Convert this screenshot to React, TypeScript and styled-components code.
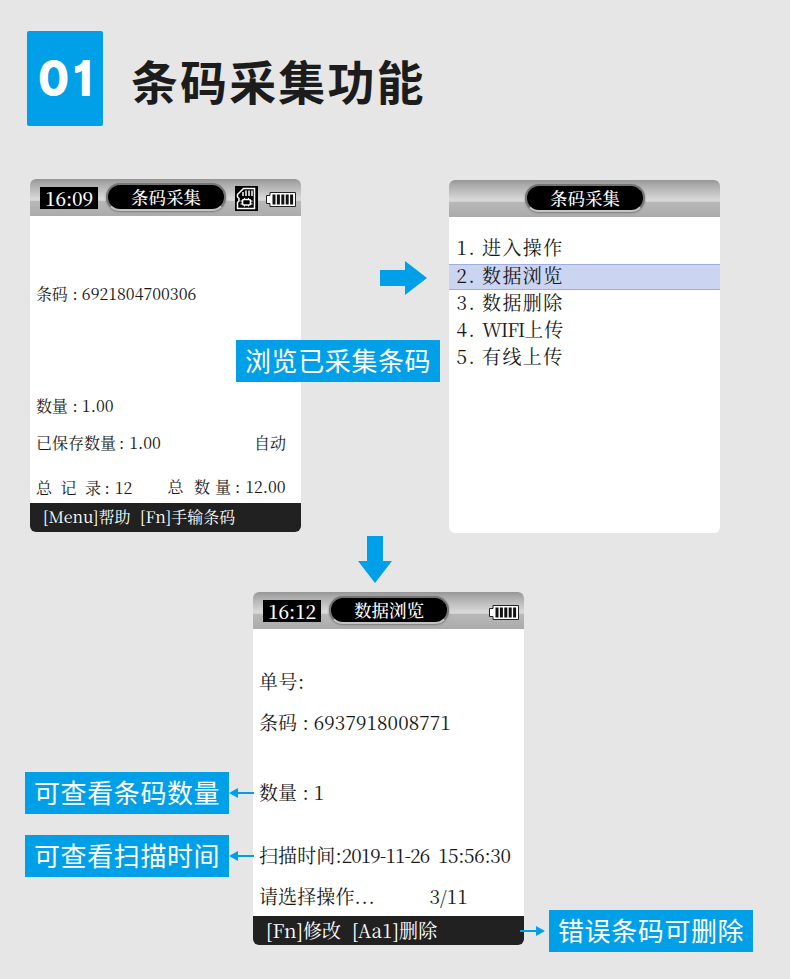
import styled, { createGlobalStyle } from 'styled-components';


const GlobalStyle = createGlobalStyle`
    * {
        box-sizing: border-box;
    }

    body {
        margin: 0;
        background-color: #E6E6E6;
    }
`;

const Page = styled.main`
    width: 790px;
    height: 979px;
    padding-top: 31px;

    display: flex;
    flex-direction: column;

    overflow: hidden;

    background-color: #E6E6E6;
    font-family: 'Noto Sans CJK SC', sans-serif;
`;

const Header = styled.header`
    height: 95px;
    padding-left: 27px;

    display: flex;
    flex-direction: row;
    align-items: center;
`;

const NumberBadge = styled.div`
    width: 76px;
    height: 95px;

    display: flex;
    align-items: center;
    justify-content: center;

    border-radius: 2px;

    background-color: #00A0E9;
`;

const BadgeText = styled.span`
    padding-left: 4px;

    font-family: 'Inter', sans-serif;
    font-size: 50px;
    font-weight: 800;
    font-feature-settings: 'cv01';
    line-height: 95px;
    letter-spacing: 4px;
    color: white;

    transform: scaleX(0.9);
`;

const Title = styled.h1`
    margin: 3px 0 0 28px;

    font-size: 47px;
    line-height: 60px;
    font-weight: 700;
    letter-spacing: 2.1px;
    color: #1C1C1C;
`;

const TopRow = styled.section`
    height: 354px;
    margin-top: 53px;
    padding-left: 30px;

    display: flex;
    flex-direction: row;
    align-items: flex-start;
`;

const MiddleColumn = styled.div`
    width: 148px;
    padding-top: 82px;

    display: flex;
    flex-direction: column;
    gap: 45px;

    z-index: 1;
`;

const RightArrow = styled.svg`
    width: 47px;
    height: 34px;
    margin-left: 79px;

    display: block;
`;

const DownArrow = styled.svg`
    width: 34px;
    height: 47px;
    margin: 3px 0 9px 358px;

    display: block;
    flex-shrink: 0;
`;

const Callout = styled.div<{ $offset?: number }>`
    width: 204px;
    height: 42px;
    margin-left: ${({ $offset }) => $offset ?? 0}px;
    padding-left: 9px;

    flex-shrink: 0;

    font-size: 26px;
    line-height: 40px;
    letter-spacing: 0.6px;
    white-space: nowrap;
    color: white;
    background-color: #00A0E9;
`;

const Screen = styled.article<{ $drop?: number }>`
    width: 271px;
    height: 353px;
    margin-top: ${({ $drop }) => $drop ?? 0}px;

    display: flex;
    flex-direction: column;
    flex-shrink: 0;

    border-radius: 6px;
    overflow: hidden;

    background-color: white;
    font-family: 'Noto Serif CJK SC', 'Liberation Serif', 'Noto Sans CJK SC', serif;
    color: #181818;
`;

const StatusBar = styled.div`
    height: 37px;
    padding: 0 5px 0 10px;

    display: grid;
    grid-template-columns: 58px 8px 120px 9px 23px 8px 30px;
    align-items: start;

    background: linear-gradient(#969696 0%, #A9A9A9 12%, #D9D9D9 54%, #D2D2D2 58%, #B8B8B8 60%, #ABABAB 100%);
`;

const Clock = styled.div`
    height: 22px;
    margin-top: 8px;

    grid-column: 1;

    text-align: center;
    font-size: 19px;
    font-weight: 500;
    line-height: 21px;
    letter-spacing: -0.2px;
    color: white;
    background-color: black;
`;

const Pill = styled.div`
    height: 28px;
    margin-top: 4px;

    grid-column: 3;

    border: 2px solid #757575;
    border-bottom-color: #C4C4C4;
    border-radius: 14px;
    box-shadow: 0 1px 2px #7C7C7C;

    text-align: center;
    font-size: 17.5px;
    font-weight: 500;
    line-height: 23px;
    color: white;
    background-color: black;
`;

const CardIcon = styled.svg`
    width: 23px;
    height: 25px;
    margin-top: 7px;

    grid-column: 5;
`;

const BatteryIcon = styled.svg`
    width: 30px;
    height: 15px;
    margin-top: 13px;

    grid-column: 7;
`;

const Body = styled.div`
    flex: 1;
`;

const Line = styled.div<{ $gap: number }>`
    height: 24px;
    margin-top: ${({ $gap }) => $gap}px;
    padding-left: 6px;

    display: flex;
    flex-direction: row;
    align-items: center;

    white-space: pre;
`;

const Run = styled.span<{ $size: number; $track?: number; $before?: number; $lift?: number }>`
    margin-left: ${({ $before }) => $before ?? 0}px;
    padding-bottom: ${({ $lift }) => $lift ?? 0}px;

    font-size: ${({ $size }) => $size}px;
    line-height: 24px;
    letter-spacing: ${({ $track }) => $track ?? 0}px;
`;

const Footer = styled.div`
    height: 29px;
    padding: 0 0 1px 13px;

    display: flex;
    flex-direction: row;
    align-items: center;

    white-space: pre;
    color: white;
    background-color: #212121;
`;

const MenuList = styled.ol`
    margin: 0;
    padding: 17px 0 0;

    list-style: none;
`;

const MenuItem = styled.li<{ $active?: boolean }>`
    height: ${({ $active }) => ($active ? 26 : 27)}px;
    margin-top: ${({ $active }) => ($active ? 3 : 0)}px;
    margin-bottom: ${({ $active }) => ($active ? -1 : 0)}px;
    padding: ${({ $active }) => ($active ? '0 0 4px 7.5px' : '0 0 2px 7.5px')};

    display: flex;
    flex-direction: row;
    align-items: center;

    border: 0 solid #9FAEDD;
    border-width: ${({ $active }) => ($active ? '1px 0' : '0')};

    background-color: ${({ $active }) => ($active ? '#CBD4F1' : 'transparent')};
`;

const MenuNumber = styled.span`
    width: 25.5px;

    font-size: 19px;
    line-height: 22px;
    letter-spacing: 1.6px;
`;

const BottomRow = styled.section`
    height: 387px;

    display: flex;
    flex-direction: row;
    align-items: flex-start;
`;

const LeftNotes = styled.div`
    width: 253px;
    padding: 180px 0 0 25px;

    display: flex;
    flex-direction: column;
    gap: 21px;

    z-index: 1;
`;

const RightNotes = styled.div`
    padding-top: 318px;

    z-index: 1;
`;

const Note = styled.div<{ $shift?: number }>`
    margin-left: ${({ $shift }) => $shift ?? 0}px;

    display: flex;
    flex-direction: row;
    align-items: center;
`;

const Pointer = styled.svg`
    width: 25px;
    height: 12px;

    display: block;
    flex-shrink: 0;
`;

const Battery = () => (
    <BatteryIcon viewBox="0 0 30 15">
        <path d="M4 .5h25.500v14H4v-3H.5v-8H4z" fill="#fff" stroke="#222" />
        <path d="M8 2.500v10M12.400 2.500v10M16.800 2.500v10M21.200 2.500v10M25.600 2.500v10" stroke="#111" strokeWidth="3" />
    </BatteryIcon>
);

const MemoryCard = () => (
    <CardIcon viewBox="0 0 23 25">
        <rect width="23" height="25" />
        <path d="M8.500 2.500h11v20h-17v-6l1.500-1.500v-2.500l-1.500-1.500v-2.500z" fill="none" stroke="#fff" strokeWidth="1.500" />
        <path d="M8 6v4M11 4.500v5.500M14 4.500v5.500M17 4.500v5.500" stroke="#fff" strokeWidth="1.500" />
        <rect x="7.500" y="13.500" width="8" height="5.500" rx="1.500" fill="none" stroke="#fff" strokeWidth="1.600" />
        <path d="M9.500 12v1.500M13.500 12v1.500M9.500 19v1.500M13.500 19v1.500M5.500 15h2M5.500 18h2M15.500 15h2M15.500 18h2" stroke="#fff" />
    </CardIcon>
);

const LeftPointer = () => (
    <Pointer viewBox="0 0 25 12">
        <path d="M0 6L9 1v4h16v2H9v4z" fill="#00A0E9" />
    </Pointer>
);

const RightPointer = () => (
    <Pointer viewBox="0 0 25 12">
        <path d="M25 6l-9-5v4H0v2h16v4z" fill="#00A0E9" />
    </Pointer>
);

const CollectScreen = () => (
    <Screen>
        <StatusBar>
            <Clock>16:09</Clock>
            <Pill>条码采集</Pill>
            <MemoryCard />
            <Battery />
        </StatusBar>
        <Body>
            <Line $gap={66}>
                <Run $size={16} $track={-0.2}>条码</Run>
                <Run $size={16} $before={5}>:</Run>
                <Run $size={16} $before={4}>6921804700306</Run>
            </Line>
            <Line $gap={88}>
                <Run $size={16} $track={-0.2}>数量</Run>
                <Run $size={16} $before={5}>:</Run>
                <Run $size={16} $before={4}>1.00</Run>
            </Line>
            <Line $gap={13}>
                <Run $size={16}>已保存数量</Run>
                <Run $size={16} $before={3}>:</Run>
                <Run $size={16} $before={5}>1.00</Run>
                <Run $size={16} $before={93}>自动</Run>
            </Line>
            <Line $gap={21}>
                <Run $size={16}>总</Run>
                <Run $size={16} $before={8.5}>记</Run>
                <Run $size={16} $before={8.5}>录</Run>
                <Run $size={16} $before={3.5}>:</Run>
                <Run $size={16} $before={5}>12</Run>
                <Run $size={16} $before={35} $lift={3}>总</Run>
                <Run $size={16} $before={10.5} $lift={3}>数</Run>
                <Run $size={16} $before={5} $lift={3}>量</Run>
                <Run $size={16} $before={4} $lift={3}>:</Run>
                <Run $size={16} $before={5} $lift={3}>12.00</Run>
            </Line>
        </Body>
        <Footer>
            <Run $size={16}>[Menu]</Run>
            <Run $size={16}>帮助</Run>
            <Run $size={16} $before={9.5}>[Fn]</Run>
            <Run $size={16}>手输条码</Run>
        </Footer>
    </Screen>
);

const MenuScreen = () => (
    <Screen $drop={1}>
        <StatusBar>
            <Pill>条码采集</Pill>
        </StatusBar>
        <Body>
            <MenuList>
                <MenuItem>
                    <MenuNumber>1.</MenuNumber>
                    <Run $size={19} $track={1.4}>进入操作</Run>
                </MenuItem>
                <MenuItem $active>
                    <MenuNumber>2.</MenuNumber>
                    <Run $size={19} $track={1.4}>数据浏览</Run>
                </MenuItem>
                <MenuItem>
                    <MenuNumber>3.</MenuNumber>
                    <Run $size={19} $track={1.4}>数据删除</Run>
                </MenuItem>
                <MenuItem>
                    <MenuNumber>4.</MenuNumber>
                    <Run $size={19} $track={-1.2}>WIFI</Run>
                    <Run $size={19} $track={1}>上传</Run>
                </MenuItem>
                <MenuItem>
                    <MenuNumber>5.</MenuNumber>
                    <Run $size={19} $track={1.4}>有线上传</Run>
                </MenuItem>
            </MenuList>
        </Body>
    </Screen>
);

const BrowseScreen = () => (
    <Screen>
        <StatusBar>
            <Clock>16:12</Clock>
            <Pill>数据浏览</Pill>
            <Battery />
        </StatusBar>
        <Body>
            <Line $gap={40}>
                <Run $size={19} $track={0.5}>单号</Run>
                <Run $size={19}>:</Run>
            </Line>
            <Line $gap={17}>
                <Run $size={19}>条码</Run>
                <Run $size={19} $before={5.5}>:</Run>
                <Run $size={19} $track={0.1} $before={5}>6937918008771</Run>
            </Line>
            <Line $gap={46}>
                <Run $size={19}>数量</Run>
                <Run $size={19} $before={5.5}>:</Run>
                <Run $size={19} $before={5}>1</Run>
            </Line>
            <Line $gap={39}>
                <Run $size={19} $track={0.1}>扫描时间</Run>
                <Run $size={19}>:</Run>
                <Run $size={19} $track={-0.9}>2019-11-26</Run>
                <Run $size={19} $track={-0.3} $before={8.5}>15:56:30</Run>
            </Line>
            <Line $gap={17}>
                <Run $size={19} $track={0.1}>请选择操作</Run>
                <Run $size={19} $track={0.8}>...</Run>
                <Run $size={19} $before={54}>3/11</Run>
            </Line>
        </Body>
        <Footer>
            <Run $size={19}>[Fn]</Run>
            <Run $size={19}>修改</Run>
            <Run $size={19} $before={11}>[Aa1]</Run>
            <Run $size={19} $track={0.2}>删除</Run>
        </Footer>
    </Screen>
);

const App: React.FC = () => {
    return (
        <>
            <GlobalStyle />
            <Page>

                <Header>
                    <NumberBadge>
                        <BadgeText>01</BadgeText>
                    </NumberBadge>
                    <Title>条码采集功能</Title>
                </Header>

                <TopRow>
                    <CollectScreen />
                    <MiddleColumn>
                        <RightArrow viewBox="0 0 47 34">
                            <path d="M0 9h25V0l22 17-22 17v-9H0z" fill="#00A0E9" />
                        </RightArrow>
                        <Callout $offset={-65}>浏览已采集条码</Callout>
                    </MiddleColumn>
                    <MenuScreen />
                </TopRow>

                <DownArrow viewBox="0 0 34 47">
                    <path d="M9 0v25H0l17 22 17-22h-9V0z" fill="#00A0E9" />
                </DownArrow>

                <BottomRow>
                    <LeftNotes>
                        <Note>
                            <Callout>可查看条码数量</Callout>
                            <LeftPointer />
                        </Note>
                        <Note>
                            <Callout>可查看扫描时间</Callout>
                            <LeftPointer />
                        </Note>
                    </LeftNotes>
                    <BrowseScreen />
                    <RightNotes>
                        <Note $shift={-4}>
                            <RightPointer />
                            <Callout $offset={4}>错误条码可删除</Callout>
                        </Note>
                    </RightNotes>
                </BottomRow>

            </Page>
        </>
    );
}

export default App;
